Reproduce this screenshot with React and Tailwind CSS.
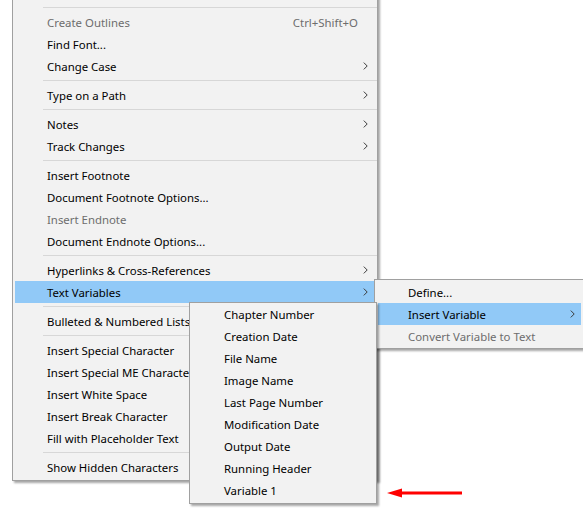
const FONT = { fontFamily: '"Noto Sans", "Open Sans", sans-serif' }

function Chevron() {
  return (
    <svg width="5" height="8" viewBox="0 0 5 8" className="block">
      <path d="M0.8 0.6 L4.2 4 L0.8 7.4" fill="none" stroke="#3c3c3c" strokeWidth="1" />
    </svg>
  )
}

function Row({ label, disabled, hot, sub, shortcut, tight, lift }) {
  return (
    <div
      className={`flex items-center h-[22px] ${tight ? 'pl-[30px]' : 'pl-[32px]'} pr-[6px] ${
        hot ? 'bg-[#91c9f7]' : ''
      } ${disabled ? 'text-[#6d6d6d]' : 'text-black'}`}
    >
      <span className={`flex-1 whitespace-nowrap leading-[22px] ${lift ? '-translate-y-[2px]' : 'translate-y-px'}`}>
        {label}
      </span>
      {shortcut && <span className="mr-[5px] whitespace-nowrap translate-y-px">{shortcut}</span>}
      <span className="w-[5px] flex justify-end">{sub && <Chevron />}</span>
    </div>
  )
}

function Sep() {
  return (
    <div className="h-[7px] flex items-center pl-[28px] -mr-[3px]">
      <div className="h-px flex-1 bg-[#d7d7d7]" />
    </div>
  )
}

const MAIN = [
  { label: 'Paragraph Styles', sub: true, lift: true },
  'sep',
  { label: 'Create Outlines', disabled: true, shortcut: 'Ctrl+Shift+O' },
  { label: 'Find Font...' },
  { label: 'Change Case', sub: true },
  'sep',
  { label: 'Type on a Path', sub: true },
  'sep',
  { label: 'Notes', sub: true },
  { label: 'Track Changes', sub: true },
  'sep',
  { label: 'Insert Footnote' },
  { label: 'Document Footnote Options...' },
  { label: 'Insert Endnote', disabled: true },
  { label: 'Document Endnote Options...' },
  'sep',
  { label: 'Hyperlinks & Cross-References', sub: true },
  { label: 'Text Variables', sub: true, hot: true },
  'sep',
  { label: 'Bulleted & Numbered Lists', sub: true },
  'sep',
  { label: 'Insert Special Character', sub: true },
  { label: 'Insert Special ME Character', sub: true },
  { label: 'Insert White Space', sub: true },
  { label: 'Insert Break Character', sub: true },
  { label: 'Fill with Placeholder Text' },
  'sep',
  { label: 'Show Hidden Characters' },
]

const TEXT_VARS = [
  { label: 'Define...', tight: true },
  { label: 'Insert Variable', sub: true, hot: true, tight: true },
  { label: 'Convert Variable to Text', disabled: true, tight: true },
]

const VARIABLES = [
  'Chapter Number',
  'Creation Date',
  'File Name',
  'Image Name',
  'Last Page Number',
  'Modification Date',
  'Output Date',
  'Running Header',
  'Variable 1',
]

function renderItems(items) {
  return items.map((it, i) =>
    it === 'sep' ? <Sep key={i} /> : <Row key={i} {...it} />
  )
}

const menuBox =
  'absolute bg-[#f2f2f2] border border-[#a0a0a0] shadow-[2px_2px_2px_rgba(0,0,0,0.35)]'

export default function App() {
  return (
    <div className="relative w-[583px] h-[523px] overflow-hidden bg-white text-[11.4px]" style={FONT}>
      {/* main Type menu */}
      <div className={`${menuBox} left-[12px] top-[-21px] w-[366px] pt-[2px] pb-[2px] pl-[2px] pr-[3px]`}>
        {renderItems(MAIN)}
      </div>

      {/* Text Variables submenu */}
      <div className={`${menuBox} left-[374px] top-[279px] w-[211px] py-[1px] pl-[3px] pr-[3px]`}>
        {renderItems(TEXT_VARS)}
      </div>

      {/* Insert Variable submenu */}
      <div className={`${menuBox} left-[189px] top-[302px] w-[188px] pt-0 pb-[2px] pl-[2px] pr-[3px]`}>
        {VARIABLES.map(v => <Row key={v} label={v} />)}
      </div>

      {/* red pointer arrow */}
      <svg className="absolute left-[386px] top-[486px]" width="78" height="14" viewBox="0 0 78 14">
        <path d="M14 5.5 H76 V8.5 H14 Z" fill="#f00" />
        <path d="M1 7 L16 2.5 L16 11.5 Z" fill="#f00" />
      </svg>
    </div>
  )
}
